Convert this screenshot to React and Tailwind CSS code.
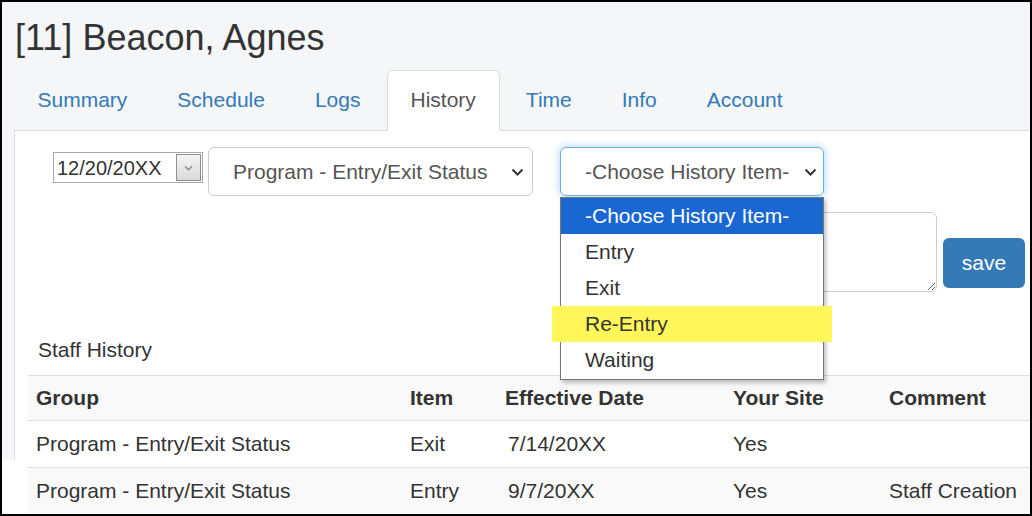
import React from 'react';

const tabs = ['Summary', 'Schedule', 'Logs', 'History', 'Time', 'Info', 'Account'];
const options = ['-Choose History Item-', 'Entry', 'Exit', 'Re-Entry', 'Waiting'];
const rows = [
  { group: 'Program - Entry/Exit Status', item: 'Exit', date: '7/14/20XX', site: 'Yes', comment: '' },
  { group: 'Program - Entry/Exit Status', item: 'Entry', date: '9/7/20XX', site: 'Yes', comment: 'Staff Creation' },
];

function Chevron({ color = '#333', w = 13, h = 8 }) {
  return (
    <svg width={w} height={h} viewBox="0 0 13 8">
      <path d="M1.5 1.5l5 5 5-5" fill="none" stroke={color} strokeWidth="2" />
    </svg>
  );
}

export default function App() {
  return (
    <div className="relative w-[1032px] h-[516px] overflow-hidden border-2 border-black bg-[#f4f6f8] text-[#333] font-['Liberation_Sans',Arial,sans-serif]">
      <h1 className="pt-[17px] pl-[13px] text-[36px] leading-[38px] font-normal">[11] Beacon, Agnes</h1>

      {/* tabs */}
      <ul className="mt-[13px] ml-[12px] flex h-[61px] border-b border-[#ddd]">
        {tabs.map(t => (
          <li key={t} className="mr-[2px]">
            <a className={`block h-[61px] pl-[22.5px] pr-[23.5px] py-[14px] text-[21px] leading-[30px] border rounded-t-[6px] ${t === 'History' ? 'bg-white border-[#ddd] border-b-white text-[#555]' : 'border-transparent text-[#337ab7]'}`}>
              {t}
            </a>
          </li>
        ))}
      </ul>

      {/* panel */}
      <div className="ml-[12px] h-[400px] bg-white border-l border-[#ddd] pt-[16px]">
        <div className="flex items-start">
          <div className="ml-[38px] mt-[5px] w-[150px] h-[31px] border border-[#a9a9a9] flex items-center justify-between pl-[3px] pr-[1px]">
            <span className="text-[20px] leading-[24px]">12/20/20XX</span>
            <span className="w-[25px] h-[27px] border border-[#8f8f8f] bg-gradient-to-b from-[#f4f4f4] to-[#dadada] flex items-center justify-center">
              <Chevron color="#8a8a8a" w={9} h={6} />
            </span>
          </div>
          <div className="ml-[5px] w-[325px] h-[49px] border border-[#ccc] rounded-[6px] flex items-center justify-between pl-[24px] pr-[8px] text-[21px] leading-[30px] text-[#555]">
            <span>Program - Entry/Exit Status</span>
            <Chevron />
          </div>
          <div className="relative ml-[27px]">
            <div className="w-[264px] h-[49px] border border-[#66afe9] rounded-[6px] shadow-[0_0_8px_rgba(102,175,233,0.6)] flex items-center justify-between pl-[24px] pr-[6px] text-[21px] leading-[30px] text-[#555]">
              <span>-Choose History Item-</span>
              <Chevron />
            </div>
            <ul className="absolute z-10 top-[50px] left-0 w-[264px] bg-white border border-[#767676] shadow-[2px_3px_4px_rgba(0,0,0,0.25)] pb-[1px] text-[21px]">
              {options.map((o, i) => (
                <li key={o} className={`relative h-[36px] leading-[36px] pl-[24px] ${i === 0 ? 'bg-[#1a67d2] text-white' : 'text-[#333]'}`}>
                  {o === 'Re-Entry' && <span className="absolute -left-[9px] -right-[9px] top-0 bottom-0 bg-[#fff65a]" />}
                  <span className="relative">{o}</span>
                </li>
              ))}
            </ul>
          </div>
        </div>

        <div className="flex items-start pl-[545px] mt-[16px]">
          <textarea className="w-[377px] h-[80px] border border-[#ccc] rounded-[6px] bg-white" />
          <button className="ml-[6px] mt-[26px] w-[82px] h-[50px] rounded-[6px] bg-[#337ab7] text-white text-[21px] leading-[30px]">save</button>
        </div>

        <p className="mt-[43px] pl-[23px] text-[21px] leading-[30px]">Staff History</p>

        <table className="mt-[10px] ml-[13px] w-[1002px] table-fixed border-collapse text-[21px] leading-[30px]">
          <colgroup>
            <col className="w-[374px]" />
            <col className="w-[95px]" />
            <col className="w-[228px]" />
            <col className="w-[156px]" />
            <col />
          </colgroup>
          <thead>
            <tr className="bg-[#f9f9f9] border-t border-[#ddd] h-[45px]">
              {['Group', 'Item', 'Effective Date', 'Your Site', 'Comment'].map(h => (
                <th key={h} className="text-left font-bold pl-[8px] py-[7px]">{h}</th>
              ))}
            </tr>
          </thead>
          <tbody>
            {rows.map((r, i) => (
              <tr key={i} className={`border-t border-[#ddd] h-[46px] ${i % 2 ? 'bg-[#f9f9f9]' : 'bg-white'}`}>
                <td className="pl-[8px] py-[8px]">{r.group}</td>
                <td className="pl-[8px] py-[8px]">{r.item}</td>
                <td className="pl-[11px] py-[8px]">{r.date}</td>
                <td className="pl-[8px] py-[8px]">{r.site}</td>
                <td className="pl-[8px] py-[8px] whitespace-nowrap">{r.comment}</td>
              </tr>
            ))}
          </tbody>
        </table>
      </div>

      {/* cropped edge of the original capture */}
      <div className="absolute left-0 top-[458px] w-[26px] h-[60px] bg-white" />
    </div>
  );
}
